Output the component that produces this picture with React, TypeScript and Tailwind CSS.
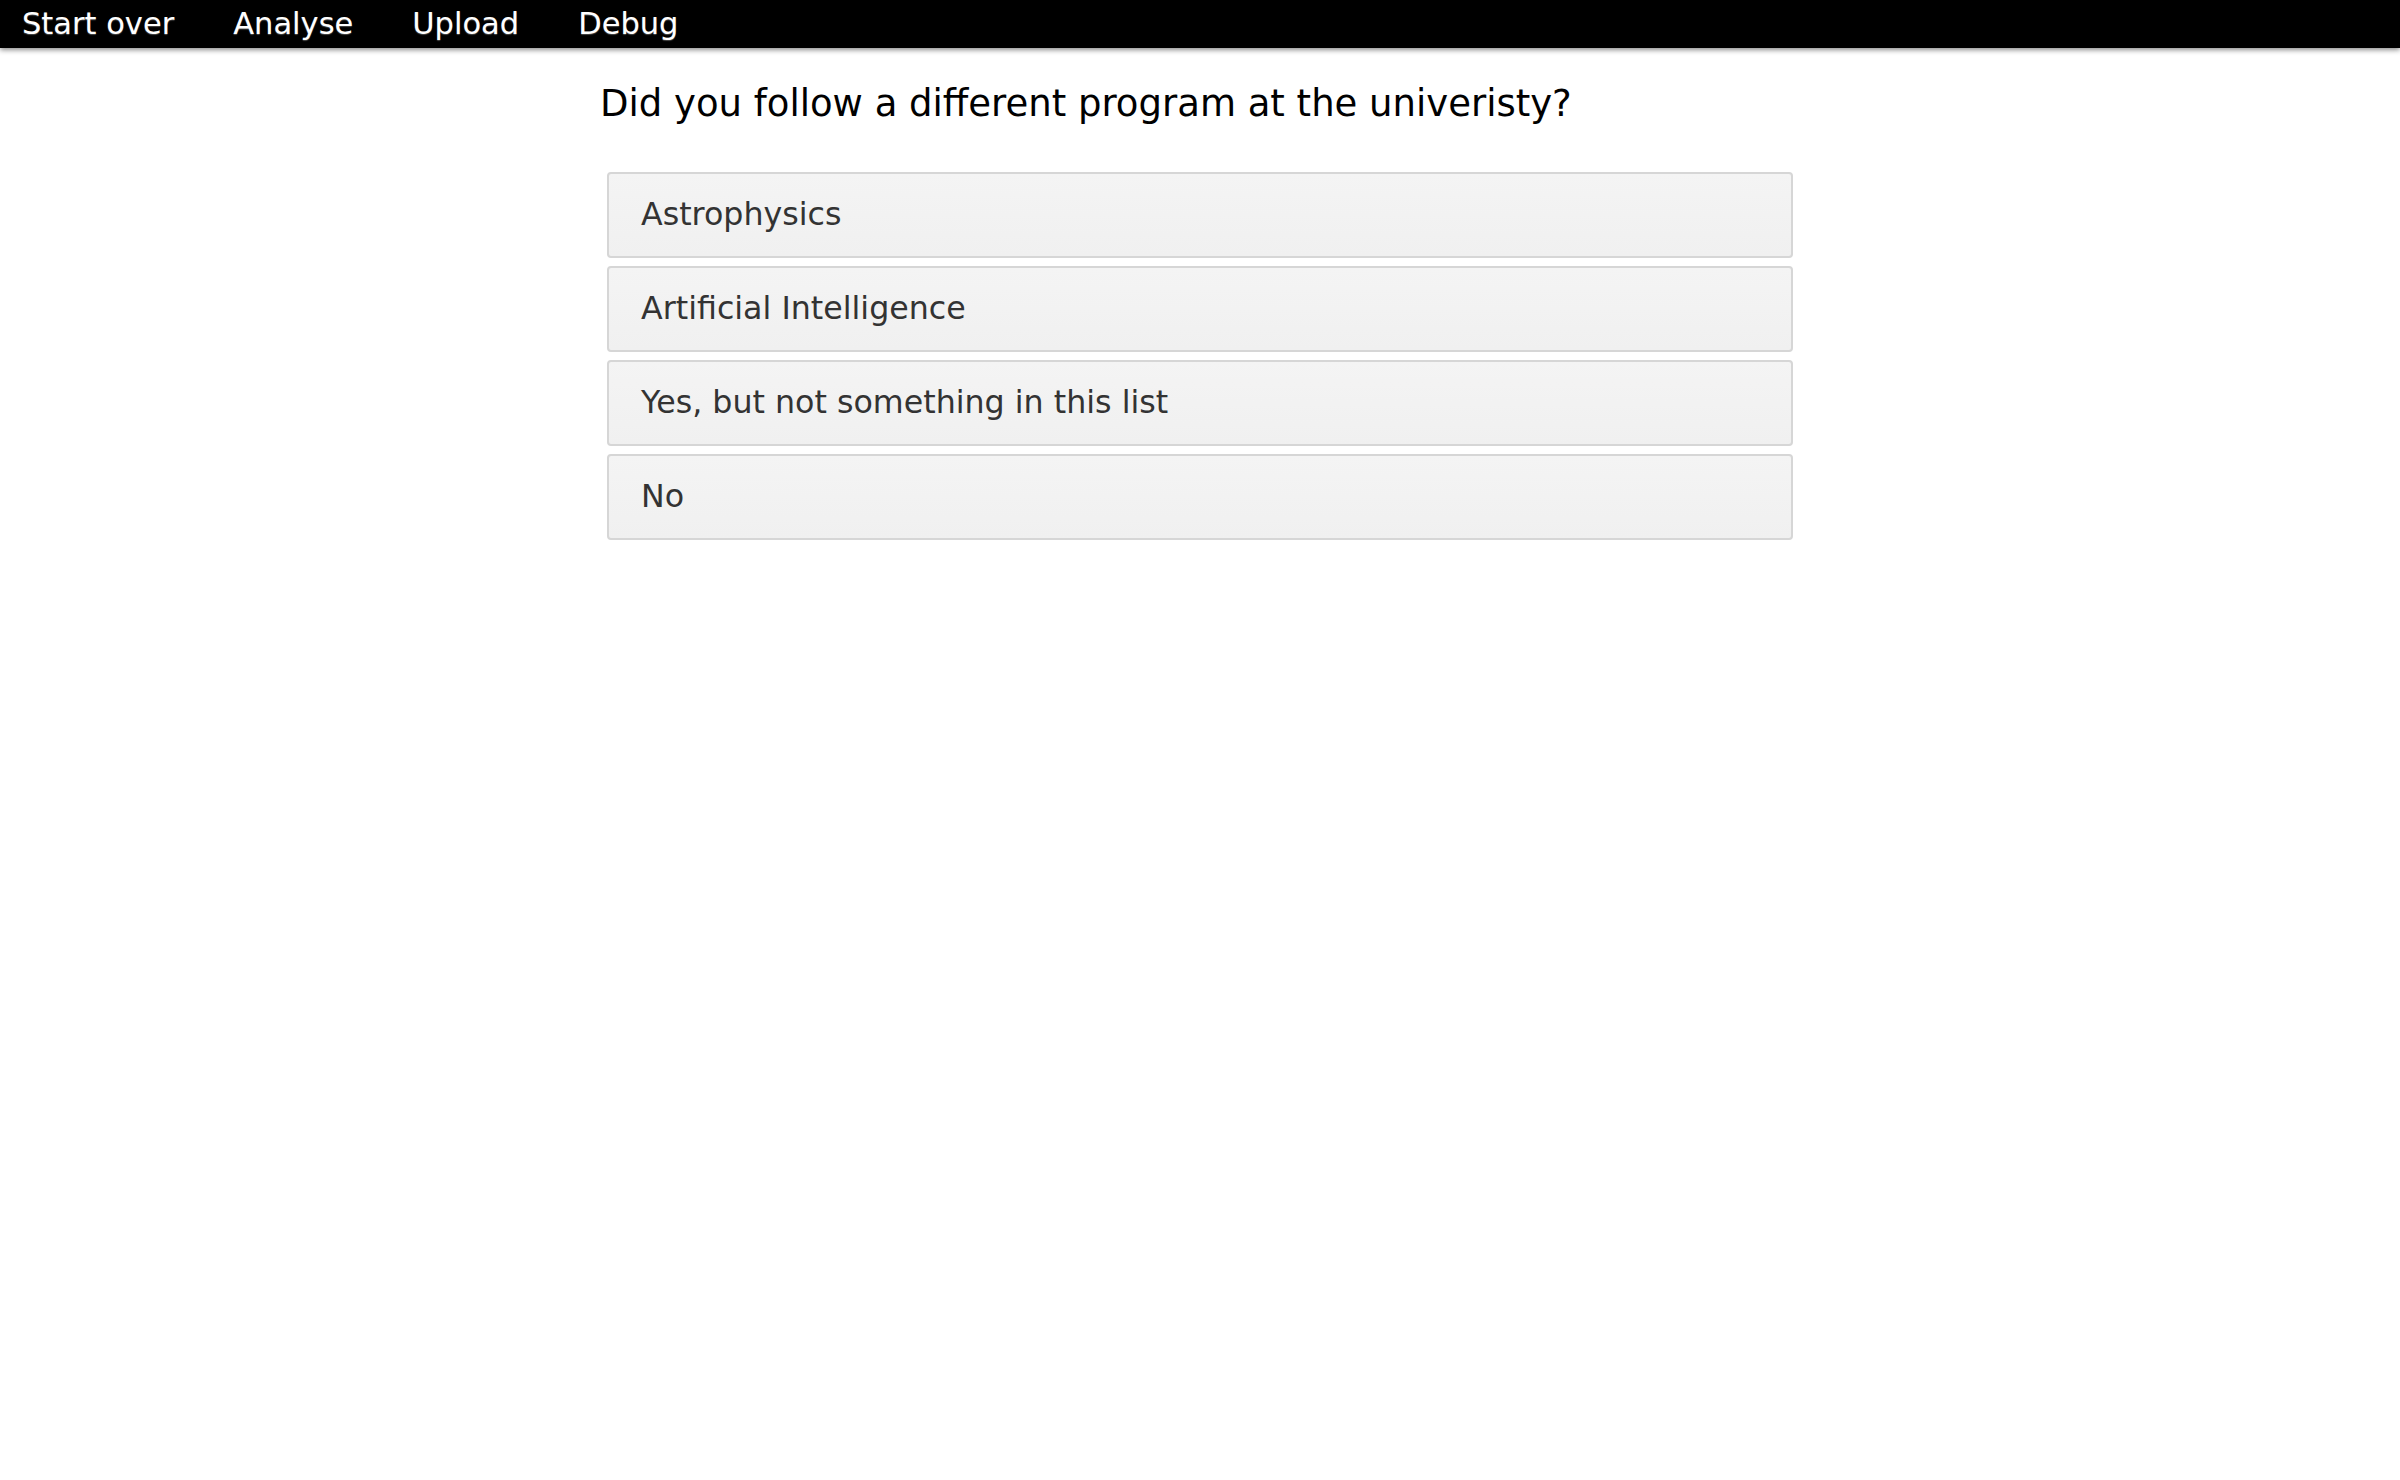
const options = [
  "Astrophysics",
  "Artificial Intelligence",
  "Yes, but not something in this list",
  "No",
];

const navItems = ["Start over", "Analyse", "Upload", "Debug"];

const App = () => {
  return (
    <div
      className="min-h-screen bg-white"
      style={{ fontFamily: '"DejaVu Sans", "Noto Sans", sans-serif' }}
    >
      <nav className="flex h-[48px] items-center gap-[59px] bg-black pl-[22px] shadow-[0_2px_5px_rgba(0,0,0,0.45)]">
        {navItems.map((item) => (
          <a
            key={item}
            href="#"
            className="text-[30.5px] leading-none text-white [text-shadow:0_1px_1px_rgba(80,80,80,0.9)]"
          >
            {item}
          </a>
        ))}
      </nav>

      <main className="mx-auto w-[1200px] pt-[34px]">
        <h1 className="text-[37px] leading-[44px] text-black">
          Did you follow a different program at the univeristy?
        </h1>

        <div className="mt-[46px] flex flex-col gap-[8px] px-[7px]">
          {options.map((option) => (
            <button
              key={option}
              className="flex h-[86px] items-center rounded-[4px] border-2 border-[#d6d6d6] bg-gradient-to-b from-[#f4f4f4] to-[#f0f0f0] pl-[32px] text-left text-[31.7px] text-[#333333]"
            >
              {option}
            </button>
          ))}
        </div>
      </main>
    </div>
  );
};

export default App;
